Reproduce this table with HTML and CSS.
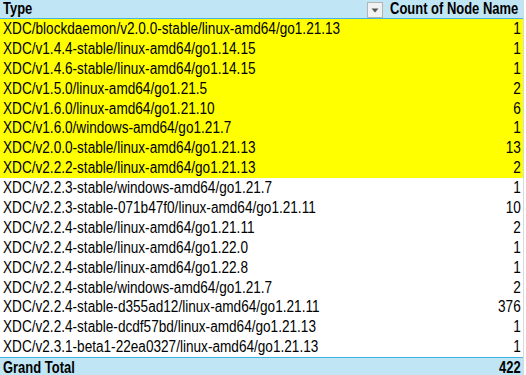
FILE: index.html
```html
<!DOCTYPE html>
<html>
<head>
<meta charset="utf-8">
<link rel="stylesheet" href="styles.css">
</head>
<body>
<div class="sheet">
  <div class="pivot">
    <div class="row head">
      <div class="c1"><span class="t">Type</span><span class="filter"><svg width="8" height="5" viewBox="0 0 8 5"><path d="M0.5 0.5h7L4 4.5z" fill="#555"/></svg></span></div>
      <div class="c2"><span class="t">Count of Node Name</span></div>
    </div>
    <div class="row hl"><div class="c1"><span class="t">XDC/blockdaemon/v2.0.0-stable/linux-amd64/go1.21.13</span></div><div class="c2"><span class="t">1</span></div></div>
    <div class="row hl"><div class="c1"><span class="t">XDC/v1.4.4-stable/linux-amd64/go1.14.15</span></div><div class="c2"><span class="t">1</span></div></div>
    <div class="row hl"><div class="c1"><span class="t">XDC/v1.4.6-stable/linux-amd64/go1.14.15</span></div><div class="c2"><span class="t">1</span></div></div>
    <div class="row hl"><div class="c1"><span class="t">XDC/v1.5.0/linux-amd64/go1.21.5</span></div><div class="c2"><span class="t">2</span></div></div>
    <div class="row hl"><div class="c1"><span class="t">XDC/v1.6.0/linux-amd64/go1.21.10</span></div><div class="c2"><span class="t">6</span></div></div>
    <div class="row hl"><div class="c1"><span class="t">XDC/v1.6.0/windows-amd64/go1.21.7</span></div><div class="c2"><span class="t">1</span></div></div>
    <div class="row hl"><div class="c1"><span class="t">XDC/v2.0.0-stable/linux-amd64/go1.21.13</span></div><div class="c2"><span class="t">13</span></div></div>
    <div class="row hl"><div class="c1"><span class="t">XDC/v2.2.2-stable/linux-amd64/go1.21.13</span></div><div class="c2"><span class="t">2</span></div></div>
    <div class="row"><div class="c1"><span class="t">XDC/v2.2.3-stable/windows-amd64/go1.21.7</span></div><div class="c2"><span class="t">1</span></div></div>
    <div class="row"><div class="c1"><span class="t">XDC/v2.2.3-stable-071b47f0/linux-amd64/go1.21.11</span></div><div class="c2"><span class="t">10</span></div></div>
    <div class="row"><div class="c1"><span class="t">XDC/v2.2.4-stable/linux-amd64/go1.21.11</span></div><div class="c2"><span class="t">2</span></div></div>
    <div class="row"><div class="c1"><span class="t">XDC/v2.2.4-stable/linux-amd64/go1.22.0</span></div><div class="c2"><span class="t">1</span></div></div>
    <div class="row"><div class="c1"><span class="t">XDC/v2.2.4-stable/linux-amd64/go1.22.8</span></div><div class="c2"><span class="t">1</span></div></div>
    <div class="row"><div class="c1"><span class="t">XDC/v2.2.4-stable/windows-amd64/go1.21.7</span></div><div class="c2"><span class="t">2</span></div></div>
    <div class="row"><div class="c1"><span class="t">XDC/v2.2.4-stable-d355ad12/linux-amd64/go1.21.11</span></div><div class="c2"><span class="t">376</span></div></div>
    <div class="row"><div class="c1"><span class="t">XDC/v2.2.4-stable-dcdf57bd/linux-amd64/go1.21.13</span></div><div class="c2"><span class="t">1</span></div></div>
    <div class="row"><div class="c1"><span class="t">XDC/v2.3.1-beta1-22ea0327/linux-amd64/go1.21.13</span></div><div class="c2"><span class="t">1</span></div></div>
    <div class="row total"><div class="c1"><span class="t">Grand Total</span></div><div class="c2"><span class="t">422</span></div></div>
  </div>
</div>
</body>
</html>
```

FILE: styles.css
```css
html, body {
  margin: 0;
  padding: 0;
  background: #ffffff;
}
.sheet {
  width: 526px;
  height: 375px;
  overflow: hidden;
}
.pivot {
  width: 523px;
  border-right: 1px solid #d9d9d9;
  font-family: "Liberation Sans", Arial, sans-serif;
  font-size: 16px;
  color: #000;
}
.row {
  display: grid;
  grid-template-columns: 384px 139px;
  height: 19.9px;
  line-height: 19.9px;
  white-space: nowrap;
}
.c1 {
  padding-left: 3px;
  position: relative;
}
.c2 {
  display: flex;
  justify-content: flex-end;
  padding-right: 2px;
  min-width: 0;
}
.t {
  display: inline-block;
  flex: none;
  transform: scaleX(0.85);
  transform-origin: left center;
}
.c2 .t {
  transform-origin: right center;
}
.head {
  height: 18px;
  line-height: 18px;
  background: #c0e6f5;
  border-bottom: 1px solid #44b3e1;
  font-weight: bold;
}
.head .t,
.total .t {
  transform: scaleX(0.81);
}
.head .c2 {
  padding-right: 5px;
}
.filter {
  position: absolute;
  left: 367px;
  top: 2px;
  width: 14px;
  height: 14px;
  background: #f2f2f2;
  border: 1px solid #b4b4b4;
  display: flex;
  align-items: center;
  justify-content: center;
}
.hl {
  background: #ffff00;
}
.total {
  background: #c0e6f5;
  border-top: 1px solid #44b3e1;
  font-weight: bold;
}
```
